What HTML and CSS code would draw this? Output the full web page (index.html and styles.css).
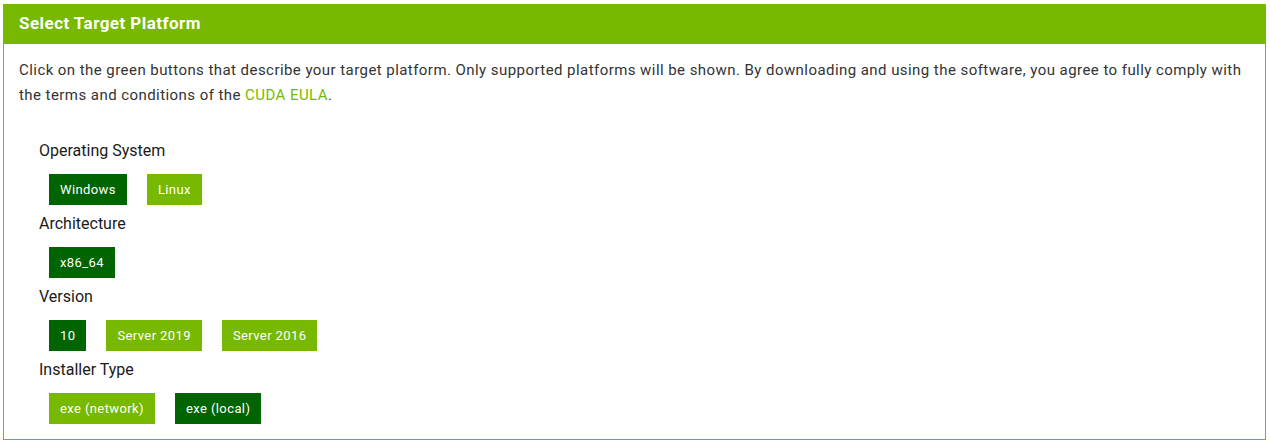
FILE: index.html
```html
<!DOCTYPE html>
<html lang="en">
<head>
<meta charset="utf-8">
<title>Select Target Platform</title>
<link rel="stylesheet" href="styles.css">
</head>
<body>
<div class="panel">
  <div class="panel-header">Select Target Platform</div>
  <div class="panel-body">
    <p class="intro">Click on the green buttons that describe your target platform. Only supported platforms will be shown. By downloading and using the software, you agree to fully comply with the terms and conditions of the <a class="link" href="#">CUDA EULA</a>.</p>
    <div class="selectors">
      <div class="group">
        <div class="label">Operating System</div>
        <div class="buttons">
          <span class="btn active">Windows</span>
          <span class="btn">Linux</span>
        </div>
      </div>
      <div class="group">
        <div class="label">Architecture</div>
        <div class="buttons">
          <span class="btn active">x86_64</span>
        </div>
      </div>
      <div class="group">
        <div class="label">Version</div>
        <div class="buttons">
          <span class="btn active">10</span>
          <span class="btn">Server 2019</span>
          <span class="btn">Server 2016</span>
        </div>
      </div>
      <div class="group">
        <div class="label">Installer Type</div>
        <div class="buttons">
          <span class="btn">exe (network)</span>
          <span class="btn active">exe (local)</span>
        </div>
      </div>
    </div>
  </div>
</div>
</body>
</html>
```

FILE: styles.css
```css
html, body {
  margin: 0;
  padding: 0;
  background: #ffffff;
}

body {
  padding: 4px 0 0 3px;
  font-family: Roboto, "Liberation Sans", sans-serif;
  color: #1a1a1a;
}

.panel {
  width: 1263px;
  box-sizing: border-box;
  border: 1px solid #76b900;
  border-top: none;
  background: #ffffff;
}

.panel-header {
  background: #76b900;
  color: #ffffff;
  font-weight: 700;
  font-size: 17px;
  letter-spacing: 0.45px;
  height: 40px;
  line-height: 38px;
  margin: 0 -1px;
  padding-left: 16px;
}

.panel-body {
  padding: 14px 15px 15px 15px;
}

.intro {
  margin: 0;
  font-size: 15px;
  letter-spacing: 0.44px;
  line-height: 25px;
  color: #333333;
}

.link {
  color: #76b900;
  text-decoration: none;
}

.selectors {
  padding: 33px 0 0 20px;
  display: flex;
  flex-direction: column;
  gap: 9px;
}

.label {
  font-size: 16px;
  line-height: 20px;
  color: #1a1a1a;
}

.buttons {
  display: flex;
  gap: 20px;
  margin: 13px 0 0 10px;
}

.btn {
  display: inline-block;
  height: 31px;
  line-height: 31px;
  padding: 0 11px;
  font-size: 13px;
  letter-spacing: 0.4px;
  color: #ffffff;
  background: #76b900;
}

.btn.active {
  background: #006400;
}
```
